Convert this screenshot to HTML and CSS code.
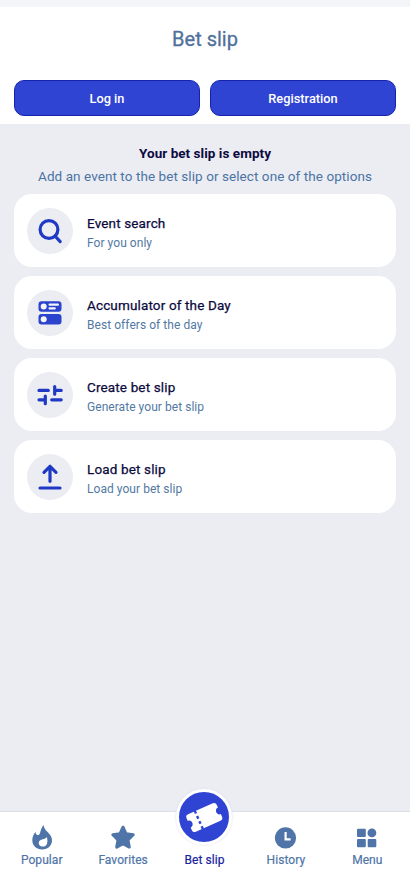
FILE: index.html
```html
<!DOCTYPE html>
<html lang="en">
<head>
<meta charset="utf-8">
<title>Bet slip</title>
<link rel="stylesheet" href="styles.css">
</head>
<body>
<div class="app">
  <header class="header">
    <h1 class="title">Bet slip</h1>
    <div class="actions">
      <button class="button">Log in</button>
      <button class="button">Registration</button>
    </div>
  </header>
  <main class="content">
    <h2 class="empty-title">Your bet slip is empty</h2>
    <p class="empty-text">Add an event to the bet slip or select one of the options</p>
    <div class="cards">
      <a class="card">
        <span class="card-icon"><svg viewBox="0 0 46 46"><circle cx="22" cy="21.5" r="8.9"/><path d="M28 28l5.2 5.6"/></svg></span>
        <span class="card-copy"><span class="card-title">Event search</span><span class="card-text">For you only</span></span>
      </a>
      <a class="card">
        <span class="card-icon"><svg viewBox="0 0 46 46"><g class="solid"><rect x="11.5" y="11.3" width="23" height="10.5" rx="3"/><rect x="11.5" y="24.1" width="23" height="10.5" rx="3"/></g><g class="cut"><circle cx="16.7" cy="16.6" r="3"/><circle cx="16.7" cy="29.2" r="3"/><rect x="21.5" y="13.6" width="10.5" height="2.1" rx="1"/><rect x="21.5" y="17.3" width="7.3" height="2.1" rx="1"/></g></svg></span>
        <span class="card-copy"><span class="card-title">Accumulator of the Day</span><span class="card-text">Best offers of the day</span></span>
      </a>
      <a class="card">
        <span class="card-icon"><svg viewBox="0 0 46 46"><path d="M12 18.4h9.3M27.7 14.6v7.6M27.7 18.4h6.5M12 27.8h6.3M18.3 24v7.7M24.7 27.8h9.5"/></svg></span>
        <span class="card-copy"><span class="card-title">Create bet slip</span><span class="card-text">Generate your bet slip</span></span>
      </a>
      <a class="card">
        <span class="card-icon"><svg viewBox="0 0 46 46"><path d="M23 27.3V12.4M17 18.3l6-6 6 6M13 34h20"/></svg></span>
        <span class="card-copy"><span class="card-title">Load bet slip</span><span class="card-text">Load your bet slip</span></span>
      </a>
    </div>
  </main>
  <nav class="nav">
    <a class="tab">
      <svg class="tab-icon" viewBox="0 0 28 28"><path fill-rule="evenodd" d="M15.6 2c.3 3.9 2.7 5.5 4.9 8 2.2 2.4 3.5 4.5 3.5 7.2 0 5.3-4.2 9.3-9.8 9.3s-9.9-3.9-9.9-9.3c0-3.3 1.2-6 3.2-8.3.2 1.9 1.1 3.1 2.6 3.1 3 0 1.5-5.7 5.5-10zM18.8 14c-1.4 2.3-4.4 2-6.5 3.2-2.2 1.3-1.9 4.5.2 5.8 2.4 1.4 5.6.3 6.5-2.3.7-2.1.5-4.5-.2-6.7z"/></svg>
      <span class="tab-label">Popular</span>
    </a>
    <a class="tab">
      <svg class="tab-icon star" viewBox="0 0 28 28"><path d="M14 4.2l3.1 6.6 7.1 1-5.2 5.1 1.3 7.2-6.3-3.5-6.3 3.5L9 16.9l-5.2-5.1 7.1-1z"/></svg>
      <span class="tab-label">Favorites</span>
    </a>
    <a class="tab active">
      <span class="badge"><svg viewBox="0 0 50 50"><g transform="translate(25.3 25.5) rotate(-24)"><path class="ticket" d="M-13.5-9.5H13.5Q16.5-9.5 16.5-6.5V-3.6C12-3.6 12 3.6 16.5 3.6V6.5Q16.5 9.5 13.5 9.5H-13.5Q-16.5 9.5-16.5 6.5V3.6C-12 3.6-12-3.6-16.5-3.6V-6.5Q-16.5-9.5-13.5-9.5Z"/><path class="perforation" d="M-6-10v3M-6-4.2v2.8M-6 1.4v2.8M-6 7v3"/></g></svg></span>
      <span class="tab-label">Bet slip</span>
    </a>
    <a class="tab">
      <svg class="tab-icon" viewBox="0 0 28 28"><circle cx="13.5" cy="14.9" r="10.6"/><path class="hands" d="M13.6 9v7.3h5"/></svg>
      <span class="tab-label">History</span>
    </a>
    <a class="tab">
      <svg class="tab-icon" viewBox="0 0 28 28"><rect x="4" y="5.8" width="8.8" height="8.3" rx="1"/><circle cx="18.9" cy="9.9" r="4.4"/><rect x="4" y="16" width="8.8" height="8.3" rx="1"/><rect x="14.7" y="16" width="8.6" height="8.3" rx="1"/></svg>
      <span class="tab-label">Menu</span>
    </a>
  </nav>
</div>
</body>
</html>
```
FILE: styles.css
```css
* { box-sizing: border-box; margin: 0; }
body { font-family: Roboto, "Liberation Sans", sans-serif; background: #ebedf3; }
.app { height: 876px; display: flex; flex-direction: column; overflow: hidden; }
.header { height: 124px; padding: 17px 14px 0; background: #fff; border-top: 7px solid #f4f5f9; }
.title { height: 32px; line-height: 31px; font-size: 20px; font-weight: 400; -webkit-text-stroke: .3px; color: #50719b; text-align: center; }
.actions { display: flex; gap: 10px; margin-top: 24px; }
.button { flex: 1; height: 36px; padding: 0; border: 1px solid #1624ad; border-radius: 10px; background: #3044d3; color: #fff; font: 500 12.8px Roboto, sans-serif; }
.content { flex: 1; padding: 19px 14px 0; text-align: center; }
.empty-title { font-size: 13.5px; line-height: 20px; font-weight: 700; color: #0d0a40; letter-spacing: .04px; }
.empty-text { margin-top: 3px; font-size: 13.5px; line-height: 20px; color: #4b73a3; white-space: nowrap; letter-spacing: .07px; }
.cards { display: flex; flex-direction: column; gap: 9px; margin-top: 8px; }
.card { height: 73px; display: flex; align-items: center; gap: 14px; padding-left: 13px; border-radius: 18px; background: #fff; text-align: left; }
.card-icon { width: 46px; height: 46px; border-radius: 50%; background: #ebedf3; }
.card-icon svg { display: block; width: 46px; height: 46px; fill: none; stroke: #2039c5; stroke-width: 3.2; stroke-linecap: round; stroke-linejoin: round; }
.card-icon .solid { fill: #2b43cd; stroke: none; }
.card-icon .cut { fill: #f4f5fb; stroke: none; }
.card-copy { padding-top: 4px; }
.card-title, .card-text { display: block; white-space: nowrap; }
.card-title { font-size: 13.5px; line-height: 20px; font-weight: 400; -webkit-text-stroke: .25px; color: #0d0a40; letter-spacing: .14px; }
.card-text { margin-top: 1px; font-size: 12px; line-height: 19px; color: #5279a3; letter-spacing: .05px; }
.nav { height: 65px; display: flex; padding: 0 2px 0 1px; border-top: 1px solid #dbe0e8; background: #fff; }
.tab { flex: 1; position: relative; display: flex; flex-direction: column; align-items: center; padding-top: 11px; color: #4f75a8; }
.tab-icon { width: 28px; height: 28px; fill: #4f75a8; }
.star { stroke: #4f75a8; stroke-width: 3; stroke-linejoin: round; }
.hands { fill: none; stroke: #fff; stroke-width: 2.2; }
.tab-label { font-size: 12px; line-height: 18px; font-weight: 400; -webkit-text-stroke: .2px; white-space: nowrap; letter-spacing: .06px; }
.active { padding-top: 39px; color: #18219e; }
.badge { position: absolute; top: -23px; left: calc(50% - 28.6px); width: 56px; height: 56px; border: 3px solid #fff; border-radius: 50%; background: #3044d3; box-shadow: 0 0 3px #dce0ed; }
.badge svg { display: block; width: 50px; height: 50px; }
.ticket { fill: #fff; }
.perforation { fill: none; stroke: #3044d3; stroke-width: 2.4; }
```
